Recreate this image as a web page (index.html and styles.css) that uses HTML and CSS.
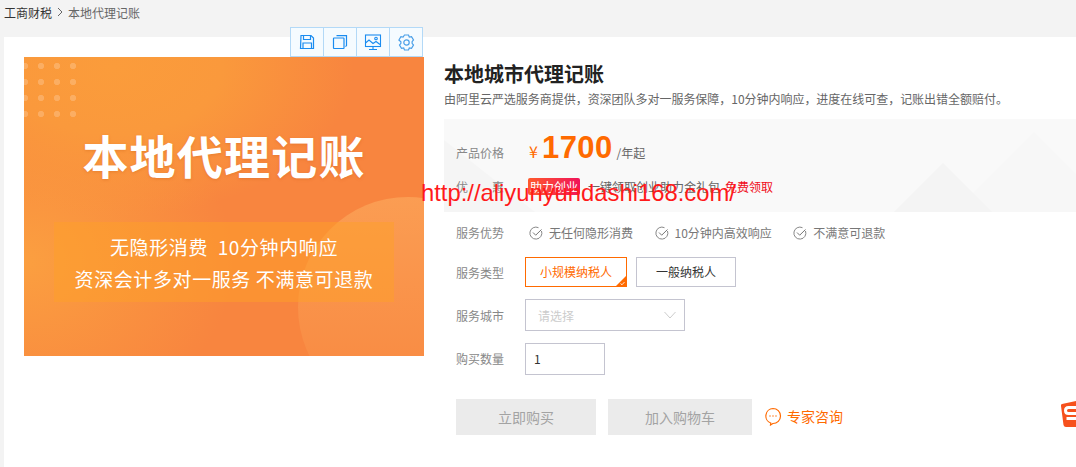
FILE: index.html
```html
<!DOCTYPE html>
<html lang="zh-CN">
<head>
<meta charset="utf-8">
<title>本地城市代理记账</title>
<link rel="stylesheet" href="styles.css">
</head>
<body>
<nav class="crumbs"><a class="crumb-root">工商财税</a><svg class="crumb-sep" width="6" height="10" viewBox="0 0 6 10"><path d="M1 1l4 4-4 4" fill="none" stroke="#666" stroke-width="1"/></svg><span class="crumb-current">本地代理记账</span></nav>
<div class="toolbar">
  <span class="tool"><svg width="16" height="16" viewBox="0 0 16 16" fill="none" stroke="#1a8cf0" stroke-width="1.2"><path d="M2 1.5h10l2.5 2.5v10.500h-13z"/><path d="M4.500 1.500v4h7v-4"/><path d="M4 14.500v-5.500h8.500v5.500"/></svg></span>
  <span class="tool"><svg width="16" height="16" viewBox="0 0 16 16" fill="none" stroke="#1a8cf0" stroke-width="1.2"><rect x="1.500" y="4" width="10.500" height="10.500" rx=".5"/><path d="M4.500 1.600h10v10l-1 1"/></svg></span>
  <span class="tool"><svg width="18" height="17" viewBox="0 0 18 17" fill="none" stroke="#1a8cf0" stroke-width="1.100"><rect x="1.500" y="1" width="15" height="11.500"/><path d="M1.500 9l3.500-3 4 3.500 3-2 4 3"/><circle cx="12" cy="4.500" r="1.300"/><path d="M9 12.500v3M5 15.500h8"/></svg></span>
  <span class="tool"><svg width="17" height="17" viewBox="0 0 17 17" fill="none" stroke="#4a9fe8" stroke-width="1.200"><path d="M6.500 1h4l.8 2 2.200-.4 2 3.400-1.400 1.700v1.600l1.400 1.700-2 3.400-2.200-.4-.8 2h-4l-.8-2-2.200.4-2-3.400 1.400-1.700v-1.600L.9 6l2-3.400 2.200.4z"/><circle cx="8.500" cy="8.500" r="2.700"/></svg></span>
</div>
<main class="panel">
  <div class="banner">
    <div class="banner-dots"></div>
    <div class="banner-circle"></div>
    <h2 class="banner-title">本地代理记账</h2>
    <div class="banner-box">
      <p class="banner-line">无隐形消费&nbsp; 10分钟内响应</p>
      <p class="banner-line">资深会计多对一服务 不满意可退款</p>
    </div>
  </div>
  <section class="info">
    <h1 class="title">本地城市代理记账</h1>
    <p class="subtitle">由阿里云严选服务商提供，资深团队多对一服务保障，10分钟内响应，进度在线可查，记账出错全额赔付。</p>
    <div class="price-box">
      <svg class="price-bg" width="632" height="93" viewBox="0 0 632 93"><path d="M0 21L91 93H0z" fill="#f5f5f5"/><path d="M590 13L670 93H510z" fill="#f7f7f7"/><path d="M499 44L548 93H450z" fill="#f4f4f4"/></svg>
      <div class="price-row">
        <span class="label price-label">产品价格</span>
        <span class="yen">¥</span><span class="amount">1700</span><span class="unit">/年起</span>
      </div>
      <div class="promo-row">
        <span class="label price-label promo-label">优惠</span>
        <span class="badge">助力创业</span>
        <span class="promo-text">一键领取创业助力金礼包</span>
        <span class="promo-link">免费领取</span>
      </div>
    </div>
    <div class="form">
      <div class="row row-adv">
        <span class="label">服务优势</span>
        <span class="adv"><svg class="check" width="14" height="14" viewBox="0 0 14 14" fill="none" stroke="#888" stroke-width="1"><path d="M12.500 5a6 6 0 1 1-3-3.300"/><path d="M4 6.500l2.700 2.700L12.500 3.500" stroke="#777"/></svg>无任何隐形消费</span>
        <span class="adv"><svg class="check" width="14" height="14" viewBox="0 0 14 14" fill="none" stroke="#888" stroke-width="1"><path d="M12.500 5a6 6 0 1 1-3-3.300"/><path d="M4 6.500l2.700 2.700L12.500 3.500" stroke="#777"/></svg>10分钟内高效响应</span>
        <span class="adv"><svg class="check" width="14" height="14" viewBox="0 0 14 14" fill="none" stroke="#888" stroke-width="1"><path d="M12.500 5a6 6 0 1 1-3-3.300"/><path d="M4 6.500l2.700 2.700L12.500 3.500" stroke="#777"/></svg>不满意可退款</span>
      </div>
      <div class="row row-type">
        <span class="label">服务类型</span>
        <span class="opt opt-on">小规模纳税人<svg class="opt-mark" width="12" height="12" viewBox="0 0 12 12"><path d="M12 0v12H0z" fill="#ff6a00"/><path d="M5.500 8.500l1.500 1.300 2.500-2.800" fill="none" stroke="#fff" stroke-width=".8"/></svg></span>
        <span class="opt">一般纳税人</span>
      </div>
      <div class="row row-city">
        <span class="label">服务城市</span>
        <span class="select">请选择<svg width="12" height="8" viewBox="0 0 12 8"><path d="M.5 1l5.500 6 5.500-6" fill="none" stroke="#ccc" stroke-width="1"/></svg></span>
      </div>
      <div class="row row-qty">
        <span class="label qty-label">购买数量</span>
        <span class="qty">1</span>
      </div>
      <div class="actions">
        <span class="btn btn-buy">立即购买</span>
        <span class="btn btn-cart">加入购物车</span>
        <span class="consult"><svg width="18" height="19" viewBox="0 0 18 19" fill="none" stroke="#ff6a00" stroke-width="1.200"><path d="M9 1.500a7.500 7.500 0 0 1 0 15h-.2l-2.300 1.500.2-2A7.500 7.500 0 0 1 9 1.500z"/><path d="M5.500 9h1M8.500 9h1M11.500 9h1" stroke-width="1.400"/></svg>专家咨询</span>
      </div>
    </div>
  </section>
</main>
<div class="watermark">http://aliyunyundashi168.com/</div>
<svg class="sogou" width="16" height="26" viewBox="0 0 16 26"><path d="M1 5Q.5 3.500 2 3L16 0v26H6Q4 26 3.500 24z" fill="#f6511d"/><path d="M16 6.500H8.500Q5.500 6.500 5.500 9.500T8.500 12.500H16M16 17.500H6.500" fill="none" stroke="#fff" stroke-width="3"/></svg>
</body>
</html>
```

FILE: styles.css
```css
* { box-sizing: border-box; }
html, body { margin: 0; height: 467px; overflow: hidden; }
body {
  position: relative;
  background: #f3f3f3;
  font-family: "Noto Sans CJK SC", "Liberation Sans", sans-serif;
  font-size: 12px;
  color: #666;
}
h1, h2, p { margin: 0; font-weight: normal; }

.crumbs {
  height: 37px;
  padding: 4px 0 0 4px;
  display: flex;
  align-items: flex-start;
  line-height: 17px;
}
.crumb-root { color: #333; }
.crumb-sep { margin: 3px 5px 0 5px; }
.crumb-current { color: #666; }

.toolbar {
  position: absolute;
  left: 290px;
  top: 27px;
  width: 133px;
  height: 30px;
  display: flex;
  background: #f5fbff;
  border: 1px solid #b3d9f7;
}
.tool {
  flex: 1;
  display: flex;
  align-items: center;
  justify-content: center;
  border-left: 1px solid #b3d9f7;
}
.tool:first-child { border-left: 0; }

.panel {
  margin-left: 4px;
  height: 430px;
  background: #fff;
  padding: 20px 0 0 20px;
  display: flex;
  gap: 20px;
}

.banner {
  position: relative;
  flex: none;
  width: 400px;
  height: 299px;
  overflow: hidden;
  background:
    radial-gradient(ellipse 240px 150px at 90px 10px, #fb9c3b 0%, #fa993c 45%, rgba(248,133,63,0) 100%),
    radial-gradient(ellipse 210px 170px at 0 205px, #fb9f40 0%, rgba(248,133,63,0) 100%),
    #f8853f;
  color: #fff;
  display: flex;
  flex-direction: column;
  align-items: center;
}
.banner-dots {
  position: absolute;
  left: -7px;
  top: 1px;
  width: 64px;
  height: 64px;
  background-image: radial-gradient(circle at 8px 8px, rgba(255,255,255,.2) 2.8px, transparent 3.4px);
  background-size: 16px 16px;
}
.banner-circle {
  position: absolute;
  left: 274px;
  top: 140px;
  width: 220px;
  height: 220px;
  border-radius: 50%;
  background: linear-gradient(180deg, rgba(255,190,110,.42), rgba(255,170,70,.05));
}
.banner-title {
  position: relative;
  margin-top: 68px;
  font-size: 46px;
  line-height: 58px;
  font-weight: 700;
  letter-spacing: 1.2px;
  text-shadow: 0 1px 3px rgba(200,90,20,.35);
}
.banner-box {
  position: relative;
  width: 340px;
  height: 80px;
  margin-top: 39px;
  background: rgba(253, 160, 40, .5);
  padding-top: 9px;
  text-align: center;
}
.banner-line {
  font-size: 19px;
  line-height: 32px;
  letter-spacing: .6px;
}

.info { flex: 1; min-width: 0; }
.title {
  margin-top: 6px;
  font-size: 20px;
  line-height: 22px;
  font-weight: 700;
  color: #222;
}
.subtitle {
  margin-top: 5px;
  line-height: 18px;
  font-size: 12px;
  color: #666;
  letter-spacing: -.03px;
  white-space: nowrap;
}
.price-box {
  position: relative;
  height: 93px;
  margin-top: 11px;
  padding: 15px 0 0 12px;
  background: #f9f9f9;
  overflow: hidden;
}
.price-bg { position: absolute; left: 0; top: 0; }
.price-row, .promo-row { position: relative; display: flex; align-items: center; }
.price-row { height: 36px; }
.promo-row { height: 17px; margin-top: 8px; }
.label { color: #888; flex: none; width: 69px; }
.price-label { width: 72px; }
.promo-label { letter-spacing: 24px; overflow: hidden; white-space: nowrap; }
.qty-label { padding-bottom: 2px; }
.yen { color: #ff6a00; font-size: 16px; margin: 0 3px 0 1px; width: 10px; padding-bottom: 2px; }
.amount {
  font-family: "Liberation Sans", sans-serif;
  font-weight: 700;
  font-size: 31px;
  color: #ff6a00;
  margin-right: 4px;
  letter-spacing: .4px;
  padding-bottom: 8px;
}
.unit { color: #666; padding-top: 1px; }
.badge {
  width: 52px;
  height: 17px;
  border-radius: 2px;
  background: linear-gradient(90deg, #ff5a2c, #f0145a);
  color: #fff;
  text-align: center;
  line-height: 17px;
  font-size: 12px;
  white-space: nowrap;
}
.promo-text { margin-left: 8px; color: #666; white-space: nowrap; }
.promo-link { margin-left: 5px; color: #f00c20; white-space: nowrap; }

.form { padding-left: 12px; }
.row { display: flex; align-items: center; }
.row-adv { height: 22px; margin-top: 9px; }
.row-type { height: 30px; margin-top: 14px; }
.row-city { height: 32px; margin-top: 12px; }
.row-qty { height: 32px; margin-top: 12px; }
.adv { display: flex; align-items: center; color: #777; margin-right: 17.5px; white-space: nowrap; }
.check { margin: 1px 6px 0 4px; }
.opt {
  position: relative;
  width: 100px;
  height: 30px;
  margin-right: 9px;
  border: 1px solid #c4c4d0;
  color: #333;
  text-align: center;
  line-height: 28px;
}
.opt-on { width: 102px; border-color: #ff6a00; color: #ff6a00; }
.opt-mark { position: absolute; right: -1px; bottom: -1px; }
.select {
  width: 160px;
  height: 32px;
  border: 1px solid #c4c4d0;
  padding: 0 8px 0 12px;
  color: #ccc;
  display: flex;
  align-items: center;
  justify-content: space-between;
}
.qty {
  width: 80px;
  height: 32px;
  border: 1px solid #c4c4d0;
  padding-left: 8px;
  line-height: 30px;
  color: #333;
}
.actions { display: flex; align-items: center; margin-top: 24px; height: 36px; }
.btn {
  height: 36px;
  background: #ebebeb;
  color: #a3a3a3;
  font-size: 14px;
  line-height: 36px;
  text-align: center;
}
.btn-buy { width: 140px; margin-right: 12px; }
.btn-cart { width: 144px; margin-right: 12px; }
.consult {
  display: flex;
  align-items: center;
  gap: 5px;
  color: #ff6a00;
  font-size: 14px;
  padding-bottom: 2px;
}

.watermark {
  position: absolute;
  left: 421px;
  top: 179px;
  font-family: "Liberation Sans", sans-serif;
  font-size: 23.8px;
  line-height: 28px;
  color: #ff1a1a;
  white-space: nowrap;
}
.sogou { position: absolute; right: 0; top: 401px; }
```
